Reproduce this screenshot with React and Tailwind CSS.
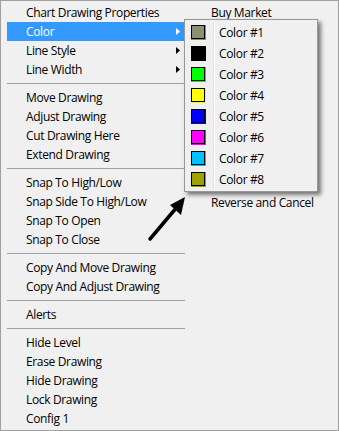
import React from "react";

const font = { fontFamily: '"Open Sans", "Noto Sans", sans-serif' };

function Arrow({ white }) {
  return (
    <svg width="4" height="7" viewBox="0 0 4 7" className="absolute right-[5px] top-[6px]">
      <path d="M0 0 L4 3.5 L0 7 Z" fill={white ? "#ffffff" : "#000000"} />
    </svg>
  );
}

function Item({ label, active, sub }) {
  return (
    <div
      className={
        "relative h-[19px] flex items-center pl-[19px] text-[12px] tracking-[-0.35px] leading-none whitespace-nowrap " +
        (active ? "bg-[#3399ff] text-white" : "text-black")
      }
    >
      {label}
      {sub && <Arrow white={active} />}
    </div>
  );
}

function Sep() {
  return (
    <div className="h-[9px] flex items-center">
      <div className="h-px w-full bg-[#a0a0a0]" />
    </div>
  );
}

const swatches = [
  { c: "#8c9070", full: false },
  { c: "#000000", full: true },
  { c: "#00ff00", full: false },
  { c: "#ffff00", full: false },
  { c: "#0000ff", full: false },
  { c: "#ff00ff", full: false },
  { c: "#00c0ff", full: false },
  { c: "#a0a000", full: false },
];

function Swatch({ c }) {
  return (
    <div className="relative w-[15px] h-[15px]" style={{ backgroundColor: c }}>
      <div className="absolute left-0 top-0 w-[14px] h-[14px] border border-black" />
    </div>
  );
}

export default function App() {
  return (
    <div
      className="relative w-[339px] h-[431px] border border-[#a0a0a0] bg-[#f0f0f0] overflow-hidden flex pt-[2px] pl-[6px]"
      style={font}
    >
      <div className="w-[178px] flex flex-col">
        <Item label="Chart Drawing Properties" />
        <Item label="Color" active sub />
        <Item label="Line Style" sub />
        <Item label="Line Width" sub />
        <Sep />
        <Item label="Move Drawing" />
        <Item label="Adjust Drawing" />
        <Item label="Cut Drawing Here" />
        <Item label="Extend Drawing" />
        <Sep />
        <Item label="Snap To High/Low" />
        <Item label="Snap Side To High/Low" />
        <Item label="Snap To Open" />
        <Item label="Snap To Close" />
        <Sep />
        <Item label="Copy And Move Drawing" />
        <Item label="Copy And Adjust Drawing" />
        <Sep />
        <Item label="Alerts" />
        <Sep />
        <Item label="Hide Level" />
        <Item label="Erase Drawing" />
        <Item label="Hide Drawing" />
        <Item label="Lock Drawing" />
        <Item label="Config 1" />
      </div>
      <div className="flex-1 flex flex-col pl-[7px]">
        <Item label="Buy Market" />
        <div className="h-[171px]" />
        <Item label="Reverse and Cancel" />
      </div>

      {/* Color submenu */}
      <div className="absolute left-[183px] top-[18px] w-[134px] h-[173px] border border-[#979797] bg-[#f0f0f0] shadow-[3px_3px_4px_rgba(0,0,0,0.5)] pt-[2px] px-[2px]">
        <div className="absolute left-[28px] top-[2px] bottom-[2px] w-px bg-[#e2e2e2]" />
        <div className="absolute left-[29px] top-[2px] bottom-[2px] w-px bg-white" />
        {swatches.map((s, i) => (
          <div key={i} className="relative h-[21px] flex items-center text-[12px] tracking-[-0.35px] leading-none text-black whitespace-nowrap">
            <div className="ml-[4px] w-[15px]">
              {s.full ? <div className="w-[15px] h-[15px] bg-black" /> : <Swatch c={s.c} />}
            </div>
            <span className="ml-[13px]">Color #{i + 1}</span>
          </div>
        ))}
      </div>

      {/* pointer arrow */}
      <svg className="absolute left-0 top-0" width="339" height="431" viewBox="0 0 339 431">
        <line x1="149" y1="238" x2="176" y2="206" stroke="#000" strokeWidth="3.5" strokeLinecap="round" />
        <path d="M184 196 L169 204 L180 214 Z" fill="#000" />
      </svg>
    </div>
  );
}
